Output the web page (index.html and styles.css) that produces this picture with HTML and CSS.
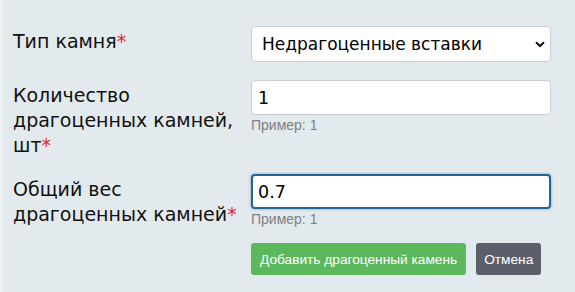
FILE: index.html
```html
<!DOCTYPE html>
<html lang="ru">
<head>
<meta charset="utf-8">
<link rel="stylesheet" href="styles.css">
</head>
<body>
<div class="page">
  <form class="form">
    <div class="row row-1">
      <label class="label">Тип камня<span class="req">*</span></label>
      <div class="field">
        <select class="control select">
          <option>Недрагоценные вставки</option>
        </select>
      </div>
    </div>
    <div class="row row-2">
      <label class="label">Количество драгоценных камней, шт<span class="req">*</span></label>
      <div class="field">
        <input class="control" type="text" value="1">
        <div class="help">Пример: 1</div>
      </div>
    </div>
    <div class="row row-3">
      <label class="label">Общий вес драгоценных камней<span class="req">*</span></label>
      <div class="field">
        <input class="control focused" type="text" value="0.7">
        <div class="help">Пример: 1</div>
      </div>
    </div>
    <div class="actions">
      <button type="button" class="btn btn-success">Добавить драгоценный камень</button>
      <button type="button" class="btn btn-secondary">Отмена</button>
    </div>
  </form>
</div>
</body>
</html>
```

FILE: styles.css
```css
html, body {
  margin: 0;
  padding: 0;
  background: #e3eaed;
}
.page {
  width: 575px;
  height: 292px;
  background: #e3eaed;
  border-left: 3px solid #edf2f3;
  box-sizing: border-box;
  padding: 26px 0 0 10px;
  font-family: "DejaVu Sans", Verdana, sans-serif;
}
.row {
  display: flex;
  align-items: flex-start;
}
.row-1 { margin-bottom: 18px; }
.row-2 { margin-bottom: 16px; }
.row-3 { margin-bottom: 16px; }
.label {
  width: 238px;
  flex: none;
  padding-top: 3px;
  font-size: 19px;
  line-height: 25px;
  color: #111;
}
.req {
  color: #e0262b;
}
.field {
  width: 300px;
}
.control {
  display: block;
  width: 300px;
  height: 35px;
  box-sizing: border-box;
  border: 1px solid #c9cdd1;
  border-radius: 4px;
  background: #fff;
  padding: 0 6px;
  font-family: "DejaVu Sans", Verdana, sans-serif;
  font-size: 17.5px;
  color: #000;
  margin: 0;
  outline: none;
}
.select {
  height: 36px;
  padding-left: 10px;
  font-size: 17px;
  -webkit-appearance: none;
  appearance: none;
  background-image: url("data:image/svg+xml;utf8,<svg xmlns='http://www.w3.org/2000/svg' width='10' height='7' viewBox='0 0 10 7'><path d='M1 1.2 L5 5 L9 1.2' fill='none' stroke='%23111' stroke-width='2'/></svg>");
  background-repeat: no-repeat;
  background-position: right 5px center;
}
.control.focused {
  border: 2px solid #26658f;
  box-shadow: 0 0 3px rgba(38, 101, 143, 0.6);
  padding-left: 5px;
}
.help {
  margin-top: 3px;
  font-family: "Liberation Sans", Arial, sans-serif;
  font-size: 14px;
  line-height: 14px;
  color: #7c8084;
}
.actions {
  display: flex;
  gap: 10px;
  padding-left: 238px;
}
.btn {
  height: 32px;
  border: none;
  border-radius: 3px;
  padding: 0 8px;
  font-family: "Liberation Sans", Arial, sans-serif;
  font-size: 13.7px;
  color: #fff;
  margin: 0;
}
.btn-success {
  background: #5cb85c;
  padding: 0 9px;
}
.btn-secondary {
  background: #5b5f6a;
}
```
